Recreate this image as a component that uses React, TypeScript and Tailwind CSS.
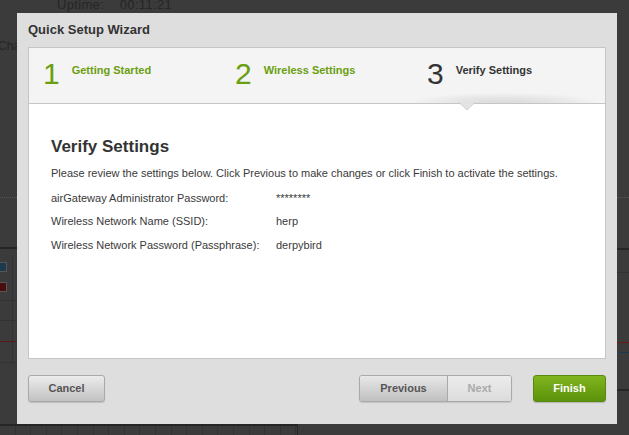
import React from "react";

const font = { fontFamily: '"Liberation Sans", Arial, Helvetica, sans-serif' };

function Step({ n, label, active }: { n: string; label: string; active?: boolean }) {
  return (
    <div className="relative flex-1 flex items-start pl-[14px] pt-[11px]">
      <span
        className={`text-[30px] leading-[30px] ${active ? "text-[#333333]" : "text-[#6a9f10]"}`}
      >
        {n}
      </span>
      <span
        className={`ml-[12px] mt-[6px] text-[11px] leading-[11px] font-bold ${
          active ? "text-[#333333]" : "text-[#6a9f10]"
        }`}
      >
        {label}
      </span>
      {active && (
        <>
          <div className="absolute left-0 right-[8px] bottom-0 h-[10px] bg-[radial-gradient(ellipse_at_bottom,#dadada_0%,#e6e6e6_40%,rgba(244,244,244,0)_75%)]" />
          <svg
            className="absolute bottom-[-8px] left-[46px]"
            width="16"
            height="9"
            viewBox="0 0 16 9"
          >
            <polygon points="0,0 16,0 8,8" fill="#e3e3e3" />
            <polyline points="0,0.5 8,8 16,0.5" fill="none" stroke="#cfcfcf" strokeWidth="1" />
          </svg>
        </>
      )}
    </div>
  );
}

function Row({ label, value }: { label: string; value: string }) {
  return (
    <div className="flex h-[23.3px] text-[11px] leading-[14px] text-[#3a3a3a]">
      <div className="w-[225px]">{label}</div>
      <div>{value}</div>
    </div>
  );
}

export default function App() {
  return (
    <div className="relative w-[629px] h-[435px] overflow-hidden bg-[#3b3b3b]" style={font}>
      {/* dimmed page behind the overlay */}
      <div className="absolute inset-0 pointer-events-none">
        <div className="absolute left-[57px] top-[-5px] text-[13px] text-[#262626] tracking-wide">
          Uptime:&nbsp;&nbsp;&nbsp; 00:11:21
        </div>
        <div className="absolute left-[-2px] top-[37px] text-[12px] text-[#262626]">Cha</div>
        <div className="absolute left-0 w-[17px] top-[197px] border-t border-dotted border-[#555]" />
        <div className="absolute right-0 w-[12px] top-[197px] border-t border-dotted border-[#555]" />
        <div className="absolute left-0 w-[17px] top-[247px] h-[2px] bg-[#262626]" />
        <div className="absolute right-0 w-[12px] top-[248px] h-[2px] bg-[#262626]" />
        <div className="absolute left-[-2px] top-[262px] w-[9px] h-[10px] bg-[#1d3a4c] border border-[#555]" />
        <div className="absolute left-[-2px] top-[282px] w-[9px] h-[10px] bg-[#4a0c0c] border border-[#555]" />
        <div className="absolute left-[12px] top-[255px] h-[110px] w-px bg-[#333]" />
        <div className="absolute left-0 w-[17px] top-[300px] h-px bg-[#333]" />
        <div className="absolute left-0 w-[17px] top-[320px] h-px bg-[#333]" />
        <div className="absolute left-0 w-[17px] top-[341px] h-px bg-[#5a1a1a]" />
        <div className="absolute left-0 w-[17px] top-[362px] h-px bg-[#333]" />
        <div className="absolute right-0 w-[12px] top-[272px] h-px bg-[#333]" />
        <div className="absolute right-0 w-[12px] top-[342px] h-px bg-[#6a1a1a]" />
        <div className="absolute right-0 w-[10px] top-[352px] h-px bg-[#1d3a4c]" />
        <div className="absolute right-0 w-[12px] top-[389px] h-[2px] bg-[#262626]" />
        <div className="absolute left-0 w-[297px] top-[424px] h-[2px] bg-[#262626]" />
        <div className="absolute left-[297px] top-[424px] h-[11px] w-px bg-[#262626]" />
        <div className="absolute left-0 top-[426px] w-[297px] h-[9px] flex">
          {Array.from({ length: 19 }).map((_, i) => (
            <div key={i} className="w-[15.6px] h-full border-r border-[#333]" />
          ))}
        </div>
      </div>

      {/* modal */}
      <div className="relative ml-[17px] mt-[13px] w-[600px] h-[411px] bg-[#dedede] px-[11px] flex flex-col">
        <div className="h-[34px] flex items-center text-[13px] font-bold text-[#333333]">
          Quick Setup Wizard
        </div>
        <div className="h-[312px] border border-[#c6c6c6] bg-white flex flex-col">
          <div className="h-[56px] bg-[#f4f4f4] border-b border-[#c6c6c6] flex">
            <Step n="1" label="Getting Started" />
            <Step n="2" label="Wireless Settings" />
            <Step n="3" label="Verify Settings" active />
          </div>
          <div className="pl-[22px] pt-[33px]">
            <h2 className="text-[17px] leading-[20px] font-bold text-[#333333]">Verify Settings</h2>
            <p className="mt-[9px] text-[11px] leading-[14px] text-[#3a3a3a]">
              Please review the settings below. Click Previous to make changes or click Finish to
              activate the settings.
            </p>
            <div className="mt-[11px] flex flex-col">
              <Row label="airGateway Administrator Password:" value="********" />
              <Row label="Wireless Network Name (SSID):" value="herp" />
              <Row label="Wireless Network Password (Passphrase):" value="derpybird" />
            </div>
          </div>
        </div>
        <div className="mt-[16px] flex justify-between">
          <button className="w-[77px] h-[27px] rounded-[3px] border border-[#a9a9a9] bg-gradient-to-b from-[#ececec] to-[#c2c2c2] text-[11px] font-bold text-[#555555] shadow-[0_1px_1px_rgba(0,0,0,0.15)]">
            Cancel
          </button>
          <div className="flex gap-[21px]">
            <div className="flex h-[27px] rounded-[3px] border border-[#a9a9a9] overflow-hidden shadow-[0_1px_1px_rgba(0,0,0,0.12)]">
              <button className="w-[88px] h-full bg-gradient-to-b from-[#e8e8e8] to-[#c0c0c0] text-[11px] font-bold text-[#555555] border-r border-[#a9a9a9]">
                Previous
              </button>
              <button className="w-[63px] h-full bg-gradient-to-b from-[#ececec] to-[#dcdcdc] text-[11px] font-bold text-[#aaaaaa]">
                Next
              </button>
            </div>
            <button className="w-[73px] h-[27px] rounded-[3px] border border-[#5b8a12] bg-gradient-to-b from-[#80b51e] to-[#5c920b] text-[11px] font-bold text-white shadow-[0_1px_1px_rgba(0,0,0,0.2)]">
              Finish
            </button>
          </div>
        </div>
      </div>
    </div>
  );
}
